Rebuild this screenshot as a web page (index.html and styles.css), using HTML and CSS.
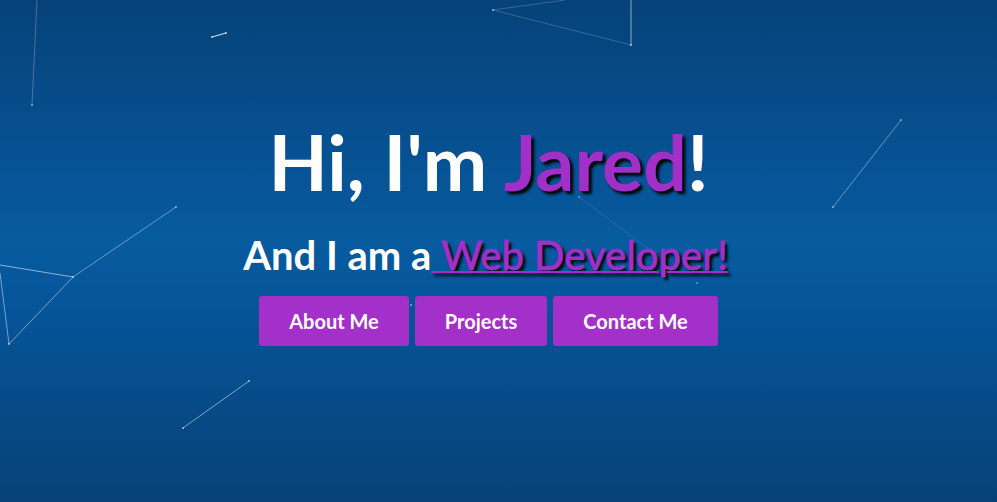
FILE: index.html
```html
<!DOCTYPE html>
<html lang="en">
<head>
<meta charset="utf-8">
<title>Jared</title>
<link rel="stylesheet" href="styles.css">
</head>
<body>
<div class="hero">
  <svg class="particles" width="997" height="502" viewBox="0 0 997 502" xmlns="http://www.w3.org/2000/svg">
    <g stroke="#ffffff" fill="#ffffff">
      <line x1="37" y1="0" x2="32" y2="105" stroke-opacity="0.25" stroke-width="1"/>
      <line x1="212" y1="37" x2="226" y2="33" stroke-opacity="0.8" stroke-width="1.2"/>
      <line x1="493" y1="10" x2="565" y2="0" stroke-opacity="0.2" stroke-width="1"/>
      <line x1="493" y1="10" x2="631" y2="45" stroke-opacity="0.2" stroke-width="1"/>
      <line x1="631" y1="0" x2="631" y2="45" stroke-opacity="0.55" stroke-width="1"/>
      <line x1="833" y1="207" x2="901" y2="120" stroke-opacity="0.4" stroke-width="1"/>
      <line x1="0" y1="265" x2="73" y2="277" stroke-opacity="0.55" stroke-width="1"/>
      <line x1="73" y1="277" x2="176" y2="207" stroke-opacity="0.4" stroke-width="1"/>
      <line x1="73" y1="277" x2="9" y2="344" stroke-opacity="0.45" stroke-width="1"/>
      <line x1="0" y1="273" x2="9" y2="344" stroke-opacity="0.45" stroke-width="1"/>
      <line x1="183" y1="428" x2="249" y2="381" stroke-opacity="0.5" stroke-width="1"/>
      <line x1="579" y1="197" x2="658" y2="256" stroke-opacity="0.12" stroke-width="1"/>
      <circle cx="32" cy="105" r="1" fill-opacity="0.5" stroke="none"/>
      <circle cx="212" cy="37" r="1" fill-opacity="0.7" stroke="none"/>
      <circle cx="226" cy="33" r="1" fill-opacity="0.7" stroke="none"/>
      <circle cx="493" cy="10" r="1" fill-opacity="0.6" stroke="none"/>
      <circle cx="631" cy="45" r="1" fill-opacity="0.6" stroke="none"/>
      <circle cx="833" cy="207" r="1" fill-opacity="0.5" stroke="none"/>
      <circle cx="901" cy="120" r="1" fill-opacity="0.5" stroke="none"/>
      <circle cx="73" cy="277" r="1" fill-opacity="0.6" stroke="none"/>
      <circle cx="176" cy="207" r="1" fill-opacity="0.5" stroke="none"/>
      <circle cx="9" cy="344" r="1" fill-opacity="0.6" stroke="none"/>
      <circle cx="183" cy="428" r="1" fill-opacity="0.6" stroke="none"/>
      <circle cx="249" cy="381" r="1" fill-opacity="0.6" stroke="none"/>
      <circle cx="579" cy="197" r="1" fill-opacity="0.4" stroke="none"/>
      <circle cx="697" cy="283" r="1" fill-opacity="0.4" stroke="none"/>
      <circle cx="411" cy="305" r="1" fill-opacity="0.5" stroke="none"/>
    </g>
  </svg>
  <div class="content">
    <h1 class="title">Hi, I'm <span class="accent">Jared</span>!</h1>
    <h2 class="subtitle">And I am a<a class="role" href="#"> Web Developer!</a></h2>
    <div class="actions">
      <a class="btn" href="#">About Me</a>
      <a class="btn" href="#">Projects</a>
      <a class="btn" href="#">Contact Me</a>
    </div>
  </div>
</div>
</body>
</html>
```

FILE: styles.css
```css
html, body {
  margin: 0;
  padding: 0;
  height: 100%;
}

body {
  font-family: Lato, "Open Sans", "Liberation Sans", sans-serif;
  overflow: hidden;
}

.hero {
  position: relative;
  height: 100vh;
  background: linear-gradient(to bottom, #064279 0%, #07569a 40%, #075c9f 47%, #06559a 60%, #064277 100%);
  display: flex;
  flex-direction: column;
  justify-content: center;
  box-sizing: border-box;
  padding: 0 20px 41px 0;
}

.particles {
  position: absolute;
  left: 0;
  top: 0;
  pointer-events: none;
}

.content {
  position: relative;
  display: flex;
  flex-direction: column;
  align-items: center;
  text-align: center;
}

.title {
  margin: 0;
  font-size: 77px;
  line-height: 1.2;
  font-weight: 700;
  color: #ffffff;
}

.accent {
  color: #a22fc7;
  text-shadow: 3px 3px 3px #000000;
}

.subtitle {
  margin: 24px 0 0;
  padding-right: 6px;
  font-size: 40px;
  line-height: 1.2;
  font-weight: 700;
  color: #ffffff;
}

.role {
  color: #a22fc7;
  font-weight: 500;
  text-decoration: underline;
  text-decoration-thickness: 2px;
  text-shadow: 3px 3px 3px #000000;
  -webkit-text-stroke: 0.4px #a22fc7;
}

.actions {
  display: flex;
  gap: 6px;
  margin-top: 17px;
}

.btn {
  display: block;
  padding: 13px 30px;
  font-size: 20px;
  line-height: 24px;
  font-weight: 700;
  color: #ffffff;
  background: #a330c8;
  border-radius: 3px;
  text-decoration: none;
}
```
